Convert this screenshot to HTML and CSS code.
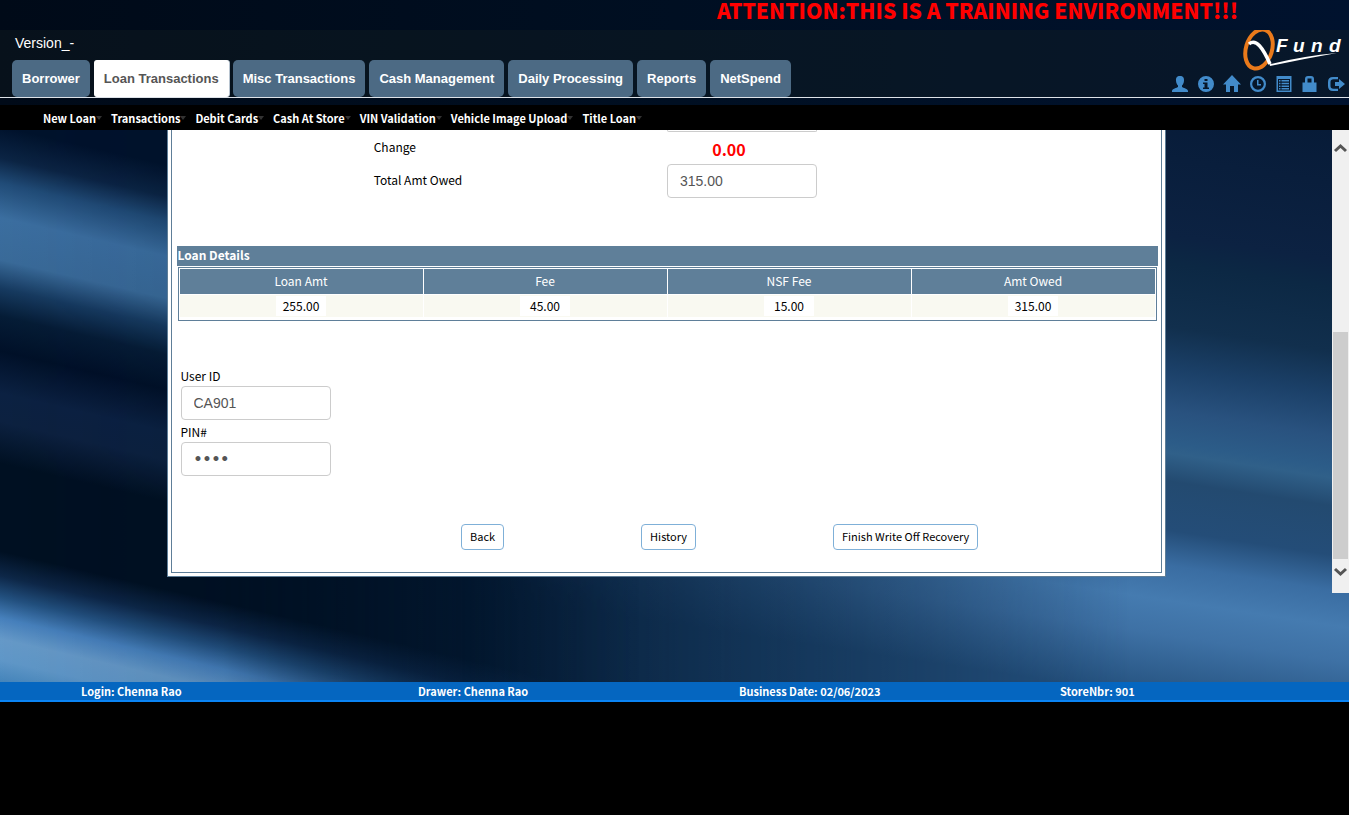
FILE: index.html
```html
<!DOCTYPE html>
<html lang="en">
<head>
<meta charset="utf-8">
<title>QFund - Loan Transactions</title>
<link rel="stylesheet" href="styles.css">
</head>
<body>
<div class="app">
  <svg class="backdrop" viewBox="0 0 1349 702" preserveAspectRatio="none" aria-hidden="true">
    <defs>
      <linearGradient id="base" x1="0" y1="0" x2="1" y2="0">
        <stop offset="0" stop-color="#000e20"/><stop offset=".35" stop-color="#041a34"/><stop offset=".6" stop-color="#0a2644"/><stop offset="1" stop-color="#071c38"/>
      </linearGradient>
      <linearGradient id="top" x1="0" y1="0" x2="1" y2="0">
        <stop offset="0" stop-color="#000a18"/><stop offset=".5" stop-color="#000f22"/><stop offset="1" stop-color="#00122e"/>
      </linearGradient>
      <linearGradient id="left" gradientUnits="userSpaceOnUse" x1="0" y1="0" x2="0" y2="702">
        <stop offset=".18" stop-color="#00122c"/>
        <stop offset=".225" stop-color="#0b2444"/>
        <stop offset=".26" stop-color="#204b77"/>
        <stop offset=".31" stop-color="#3b6ea0"/>
        <stop offset=".37" stop-color="#396a99"/>
        <stop offset=".41" stop-color="#163a60"/>
        <stop offset=".45" stop-color="#051c36"/>
        <stop offset=".5" stop-color="#001028"/>
        <stop offset=".56" stop-color="#0b2142"/>
        <stop offset=".6" stop-color="#0c2140"/>
        <stop offset=".66" stop-color="#001022"/>
        <stop offset=".785" stop-color="#001022"/>
        <stop offset=".82" stop-color="#0d2748"/>
        <stop offset=".85" stop-color="#22507f"/>
        <stop offset=".88" stop-color="#4680bc"/>
        <stop offset=".91" stop-color="#6599c8"/>
        <stop offset=".94" stop-color="#5f97c8"/>
        <stop offset=".97" stop-color="#4585bb"/>
        <stop offset="1" stop-color="#3a78b0"/>
      </linearGradient>
      <linearGradient id="right" gradientUnits="userSpaceOnUse" x1="0" y1="0" x2="0" y2="702">
        <stop offset=".12" stop-color="#061a36"/>
        <stop offset=".34" stop-color="#0c2242"/>
        <stop offset=".38" stop-color="#0c2844"/>
        <stop offset=".47" stop-color="#112f4d"/>
        <stop offset=".53" stop-color="#1b4068"/>
        <stop offset=".59" stop-color="#29527f"/>
        <stop offset=".635" stop-color="#2c5c88"/>
        <stop offset=".65" stop-color="#306089"/>
        <stop offset=".69" stop-color="#234a70"/>
        <stop offset=".76" stop-color="#244d78"/>
        <stop offset=".81" stop-color="#3a6da2"/>
        <stop offset=".86" stop-color="#457bb0"/>
        <stop offset=".91" stop-color="#3e71a5"/>
        <stop offset="1" stop-color="#25527f"/>
      </linearGradient>
      <linearGradient id="fade-out" gradientUnits="userSpaceOnUse" x1="0" y1="0" x2="640" y2="0">
        <stop offset="0" stop-color="#fff"/><stop offset=".35" stop-color="#fff" stop-opacity=".9"/><stop offset="1" stop-color="#fff" stop-opacity="0"/>
      </linearGradient>
      <linearGradient id="fade-in" gradientUnits="userSpaceOnUse" x1="460" y1="0" x2="1130" y2="0">
        <stop offset="0" stop-color="#fff" stop-opacity="0"/><stop offset=".5" stop-color="#fff" stop-opacity=".4"/><stop offset="1" stop-color="#fff"/>
      </linearGradient>
      <mask id="mask-left" maskUnits="userSpaceOnUse" x="0" y="0" width="1349" height="702"><rect width="1349" height="702" fill="url(#fade-out)"/></mask>
      <mask id="mask-right" maskUnits="userSpaceOnUse" x="0" y="0" width="1349" height="702"><rect width="1349" height="702" fill="url(#fade-in)"/></mask>
    </defs>
    <rect width="1349" height="702" fill="url(#base)"/>
    <g mask="url(#mask-right)"><rect x="0" y="-200" width="1349" height="1000" fill="url(#right)" transform="translate(0 -180) skewY(8.6)"/></g>
    <g mask="url(#mask-left)"><rect x="0" y="-300" width="700" height="1100" fill="url(#left)" transform="skewY(13)"/></g>
    <rect width="1349" height="130" fill="url(#top)"/>
  </svg>

  <p class="notice">ATTENTION:THIS IS A TRAINING ENVIRONMENT!!!</p>

  <header class="header">
    <div class="header-main">
      <div class="version">Version_-</div>
      <nav class="tabs" aria-label="Modules">
        <a class="tab" href="#">Borrower</a>
        <a class="tab tab-active" href="#">Loan Transactions</a>
        <a class="tab" href="#">Misc Transactions</a>
        <a class="tab" href="#">Cash Management</a>
        <a class="tab" href="#">Daily Processing</a>
        <a class="tab" href="#">Reports</a>
        <a class="tab" href="#">NetSpend</a>
      </nav>
    </div>
    <div class="header-side">
      <svg class="logo" width="102" height="42" viewBox="0 0 102 42" role="img" aria-label="QFund">
        <ellipse cx="16" cy="19" rx="13" ry="20" transform="rotate(17 16 19)" fill="none" stroke="#ea7a1b" stroke-width="4"/>
        <path d="M6 14C13 8 20 18 27 34" fill="none" stroke="#fff" stroke-width="3.500"/>
        <path d="M26 32L28 34Q60 26 94 23Q60 29 27 36Z" fill="#fff"/>
        <text class="logo-text" x="33 50 68 86" y="22">Fund</text>
      </svg>
      <div class="tools">
        <a href="#" aria-label="Profile"><svg width="18" height="18" viewBox="0 0 18 18"><path d="M9 1C5.800 1 4.800 3 5 5.500C5.100 8 6 9.500 7 10.500V12C6 13 1 13.500 1 16V17H17V16C17 13.500 12 13 11 12V10.500C12 9.500 12.900 8 13 5.500C13.200 3 12.200 1 9 1Z"/></svg></a>
        <a href="#" aria-label="Information"><svg width="18" height="18" viewBox="0 0 18 18"><path fill-rule="evenodd" d="M9 1a8 8 0 1 0 0 16a8 8 0 0 0 0-16ZM7.500 4h3v2h-3ZM6 7.500h4.500v5H12V14H6v-1.500h1.500V9H6Z"/></svg></a>
        <a href="#" aria-label="Home"><svg width="18" height="18" viewBox="0 0 18 18"><path d="M9 0L18 9.500H15V17H11V11H7V17H3V9.500H0L9 0Z"/></svg></a>
        <a href="#" aria-label="History"><svg width="18" height="18" viewBox="0 0 18 18"><path fill-rule="evenodd" d="M9 1a8 8 0 1 0 0 16a8 8 0 0 0 0-16ZM9 3.200a5.800 5.800 0 1 1 0 11.600a5.800 5.800 0 0 1 0-11.600ZM8 5h1.500v4H12v1.500H8Z"/></svg></a>
        <a href="#" aria-label="Reports"><svg width="18" height="18" viewBox="0 0 18 18"><path fill-rule="evenodd" d="M1.500 1h15v16h-15ZM3 4v11.500h12V4ZM4 5h1.500v1.500H4ZM6.500 5H14v1.500H6.500ZM4 7.700h1.500v1.500H4ZM6.500 7.700H14v1.500H6.500ZM4 10.400h1.500v1.500H4ZM6.500 10.400H14v1.500H6.500ZM4 13h1.500v1.500H4ZM6.500 13H14v1.500H6.500Z"/></svg></a>
        <a href="#" aria-label="Lock"><svg width="18" height="18" viewBox="0 0 18 18"><path fill-rule="evenodd" d="M1.500 7.500H4V4Q4 1 7 1H10Q13 1 13 4V7.500H15.500V17H1.500ZM6.500 7.500H10.500V3.500H6.500Z"/></svg></a>
        <a href="#" aria-label="Log out"><svg width="18" height="18" viewBox="0 0 18 18"><path d="M11 2H6Q1 2 1 7V11Q1 16 6 16H11V13.700H6.500Q3.500 13.700 3.500 11V7Q3.500 4.300 6.500 4.300H11Z"/><path d="M8 7H12V4L18 9L12 14V11H8Z"/></svg></a>
      </div>
    </div>
  </header>

  <nav class="menu" aria-label="Loan Transactions">
    <a href="#">New Loan</a>
    <a href="#">Transactions</a>
    <a href="#">Debit Cards</a>
    <a href="#">Cash At Store</a>
    <a href="#">VIN Validation</a>
    <a href="#">Vehicle Image Upload</a>
    <a href="#">Title Loan</a>
  </nav>

  <div class="workspace">
    <main class="content">
      <form class="card">
        <div class="card-inner">
          <div class="amounts">
            <div class="field-edge"></div>
            <span class="label">Change</span>
            <output class="change">0.00</output>
            <label class="label label-owed" for="owed">Total Amt Owed</label>
            <input class="box" id="owed" type="text" value="315.00">
          </div>

          <section class="details">
            <h2 class="details-title">Loan Details</h2>
            <table class="details-table">
              <thead><tr><th scope="col">Loan Amt</th><th scope="col">Fee</th><th scope="col">NSF Fee</th><th scope="col">Amt Owed</th></tr></thead>
              <tbody><tr>
                <td><input class="cell" type="text" aria-label="Loan Amt" value="255.00" readonly></td>
                <td><input class="cell" type="text" aria-label="Fee" value="45.00" readonly></td>
                <td><input class="cell" type="text" aria-label="NSF Fee" value="15.00" readonly></td>
                <td><input class="cell" type="text" aria-label="Amt Owed" value="315.00" readonly></td>
              </tr></tbody>
            </table>
          </section>

          <div class="signoff">
            <label class="label" for="user">User ID</label>
            <input class="box" id="user" type="text" value="CA901">
            <label class="label" for="pin">PIN#</label>
            <input class="box box-pin" id="pin" type="password" value="1234">
          </div>

          <div class="actions">
            <button type="button">Back</button>
            <button type="button">History</button>
            <button type="button">Finish Write Off Recovery</button>
          </div>
        </div>
      </form>
    </main>
    <div class="scrollbar" aria-hidden="true">
      <svg width="17" height="17" viewBox="0 0 17 17"><path d="M3 11L8.500 6L14 11"/></svg>
      <div class="thumb"></div>
      <svg width="17" height="17" viewBox="0 0 17 17"><path d="M3 6L8.500 11L14 6"/></svg>
    </div>
  </div>

  <footer class="status">
    <span>Login: Chenna Rao</span>
    <span>Drawer: Chenna Rao</span>
    <span>Business Date: 02/06/2023</span>
    <span>StoreNbr: 901</span>
  </footer>
</div>
</body>
</html>
```
FILE: styles.css
```css
* { box-sizing: border-box; }

body {
  margin: 0;
  background: #000;
  color: #000;
  font: 12px/18px "Noto Sans CJK SC", "Noto Sans", sans-serif;
}

a { text-decoration: none; }

.app { position: relative; }

.backdrop {
  position: absolute;
  inset: 0;
  z-index: -1;
  width: 100%;
  height: 100%;
}

.notice {
  height: 30px;
  margin: 0;
  padding-right: 111px;
  color: #f00;
  font-size: 21px;
  font-weight: 900;
  line-height: 20px;
  text-align: right;
}

/* Header */
.header {
  display: flex;
  justify-content: space-between;
  height: 68px;
  padding-left: 12px;
  border-bottom: 1px solid #dde2e8;
  background: rgba(24, 36, 36, .3);
}

.version {
  height: 30px;
  padding-left: 3px;
  color: #fff;
  font: 14px/26px "Liberation Sans", sans-serif;
}

.tabs { display: flex; gap: 4px; }

.tab {
  padding: 0 10px;
  border-radius: 5px;
  background: #4c6a84;
  color: #fff;
  font: bold 13px/37px "Liberation Sans", sans-serif;
}

.tab-active {
  border-radius: 3px;
  background: #fff;
  color: #555;
  box-shadow: 1px 0 #b8c4d0;
}

.header-side {
  display: flex;
  flex-direction: column;
  align-items: flex-end;
  padding-right: 4px;
}

.logo { display: block; }

.logo-text {
  fill: #fff;
  font: italic bold 19px "Liberation Sans Narrow", "Liberation Sans", sans-serif;
}

.tools { display: flex; gap: 8px; padding-top: 3px; }
.tools a { display: block; height: 18px; }
.tools svg { display: block; fill: #428bca; }

/* Menu bar */
.menu {
  display: flex;
  gap: 9px;
  height: 25px;
  margin-top: 7px;
  padding-left: 43px;
  background: #000;
}

.menu a {
  display: flex;
  align-items: center;
  color: #fff;
  font-size: 11px;
  font-weight: 700;
  line-height: 24px;
}

.menu a::after {
  content: "";
  border: 3px solid transparent;
  border-top: 4px solid #333;
  border-bottom: 0;
}

/* Work area */
.workspace {
  display: flex;
  align-items: flex-start;
  padding-bottom: 89px;
}

.content { flex: 1; }

.card {
  width: 75%;
  margin: 0 auto;
  padding: 0 3px 3px;
  border: 1px solid #5e7e98;
  border-top: 0;
  background: #fff;
}

.card-inner {
  padding: 0 3px 22px 5px;
  border: 1px solid #5e7e98;
  border-top: 0;
}

.label { color: #000; }

.box {
  width: 150px;
  height: 34px;
  padding: 0 12px;
  border: 1px solid #ccc;
  border-radius: 4px;
  background: #fff;
  color: #555;
  font: 14px/20px "Liberation Sans", sans-serif;
}

.box-pin { font: bold 14px/20px "DejaVu Sans", sans-serif; }

.amounts {
  display: grid;
  grid-template-columns: 3fr 5fr;
  padding-left: 20%;
}

.field-edge {
  grid-column: 2;
  width: 150px;
  height: 2px;
  border: 1px solid #ccc;
  border-top: 0;
  border-radius: 0 0 4px 4px;
}

.amounts .label { padding: 6px 0 0 1px; }
.amounts .label-owed { padding-top: 7px; }

.change {
  width: 150px;
  padding: 4px 26px 1px 0;
  color: #f00;
  font-size: 16px;
  font-weight: 700;
  line-height: 27px;
  text-align: center;
}

.details { padding-top: 48px; }

.details-title {
  height: 20px;
  margin: 0;
  padding-left: 1px;
  background: #5f7f99;
  color: #fff;
  font-size: 12px;
  line-height: 18px;
}

.details-table {
  width: calc(100% - 2px);
  margin: 1px 1px 0;
  padding-bottom: 2px;
  border: 1px solid #5f7f99;
  border-spacing: 1px;
  table-layout: fixed;
}

.details-table th {
  height: 25px;
  padding: 0 0 1px;
  background: #5f7f99;
  color: #fff;
  font-weight: 400;
}

.details-table td {
  height: 22px;
  padding: 0;
  background: #f9f9f1;
  text-align: center;
}

.cell {
  display: block;
  width: 50px;
  height: 20px;
  margin: 0 auto;
  padding: 0;
  border: 0;
  background: #fff;
  font: 12px/20px "Noto Sans CJK SC", "Noto Sans", sans-serif;
  text-align: center;
}

.signoff {
  display: flex;
  flex-direction: column;
  align-items: flex-start;
  padding: 43px 4px 48px;
}

.signoff .label { padding: 3px 0 1px; }

.actions {
  display: flex;
  gap: 137px;
  padding-left: 29%;
}

.actions button {
  height: 26px;
  padding: 0 8px 2px;
  border: 1px solid #7fb0d8;
  border-radius: 4px;
  background: #fff;
  color: #000;
  font: 11px/22px "Noto Sans CJK SC", "Noto Sans", sans-serif;
}

.scrollbar {
  display: flex;
  flex-direction: column;
  width: 17px;
  height: 463px;
  padding: 10px 0 13px;
  background: #f0f0f0;
}

.scrollbar svg { fill: none; stroke: #555; stroke-width: 3; }

.thumb {
  height: 227px;
  margin: auto 1px 0;
  background: #cdcdcd;
}

.scrollbar .thumb + svg { margin-top: 4px; }

/* Status bar */
.status {
  display: grid;
  grid-template-columns: 337px 321px 321px 1fr;
  padding-left: 81px;
  border-bottom: 2px solid #0a84f5;
  background: #0566c0;
  color: #fff;
  font-size: 11px;
  font-weight: 700;
}
```
